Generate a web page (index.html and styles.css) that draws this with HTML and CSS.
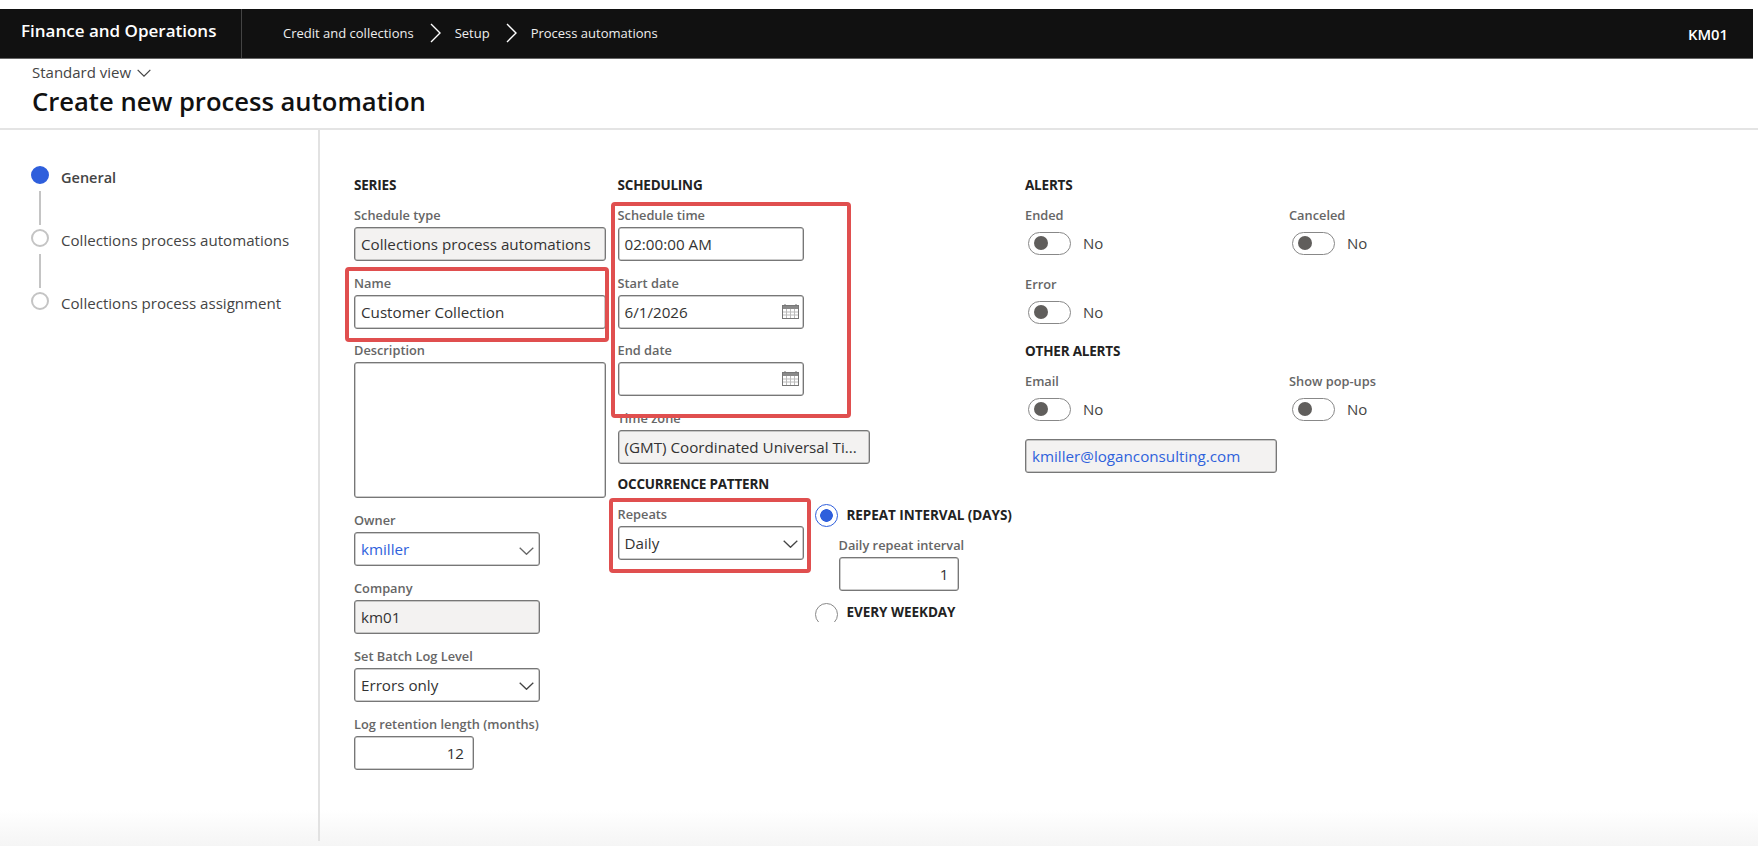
FILE: index.html
```html
<!DOCTYPE html>
<html lang="en">
<head>
<meta charset="utf-8">
<title>Create new process automation</title>
<link rel="stylesheet" href="styles.css">
</head>
<body>
<svg class="defs" width="0" height="0" aria-hidden="true">
  <symbol id="chev" viewBox="0 0 15 8"><path d="M.7.7 7.5 7.3 14.3.7" fill="none" stroke="currentColor" stroke-width="1.3"/></symbol>
  <symbol id="cal" viewBox="0 0 17 15">
    <rect x=".5" y="1.5" width="16" height="13" fill="#fff" stroke="#777"/>
    <rect x="1" y="2" width="15" height="3" fill="#8a8a8a"/>
    <path d="M3 0v2M14 0v2" stroke="#777"/>
    <path d="M1 8h15M1 11h15M4.500 5v9M8.500 5v9M12.500 5v9" stroke="#bbb"/>
  </symbol>
</svg>
<header class="topbar">
  <div class="brand">Finance and Operations</div>
  <nav class="crumbs">
    <span>Credit and collections</span>
    <svg class="crumb-sep" viewBox="0 0 11 20"><path d="M1 1l9 9-9 9" fill="none" stroke="#fff" stroke-width="1.4"/></svg>
    <span>Setup</span>
    <svg class="crumb-sep" viewBox="0 0 11 20"><path d="M1 1l9 9-9 9" fill="none" stroke="#fff" stroke-width="1.4"/></svg>
    <span>Process automations</span>
  </nav>
  <div class="company">KM01</div>
</header>
<section class="pagehead">
  <div class="view">Standard view <svg class="view-chev"><use href="#chev"/></svg></div>
  <h1>Create new process automation</h1>
</section>
<main class="main">
  <aside class="steps">
    <div class="step"><span class="dot dot-on"></span><span class="step-name step-on">General</span></div>
    <div class="step-line"></div>
    <div class="step"><span class="dot"></span><span class="step-name">Collections process automations</span></div>
    <div class="step-line"></div>
    <div class="step"><span class="dot"></span><span class="step-name">Collections process assignment</span></div>
  </aside>
  <div class="content">
    <div class="col col-series">
      <h2>SERIES</h2>
      <div class="field"><label>Schedule type</label><div class="input wide off">Collections process automations</div></div>
      <div class="field mark fit tight"><label>Name</label><div class="input wide">Customer Collection</div><i class="red red-name"></i></div>
      <div class="field"><label>Description</label><div class="input wide area"></div></div>
      <div class="field"><label>Owner</label><div class="input mid link">kmiller<svg class="chev chev-soft"><use href="#chev"/></svg></div></div>
      <div class="field"><label>Company</label><div class="input mid off">km01</div></div>
      <div class="field"><label>Set Batch Log Level</label><div class="input mid">Errors only<svg class="chev"><use href="#chev"/></svg></div></div>
      <div class="field"><label>Log retention length (months)</label><div class="input small num">12</div></div>
    </div>
    <div class="col col-sched">
      <h2>SCHEDULING</h2>
      <div class="mark">
        <div class="field"><label>Schedule time</label><div class="input mid">02:00:00 AM</div></div>
        <div class="field tight"><label>Start date</label><div class="input mid">6/1/2026<svg class="cal"><use href="#cal"/></svg></div></div>
        <div class="field"><label>End date</label><div class="input mid"><svg class="cal"><use href="#cal"/></svg></div></div>
        <i class="red red-sched"></i>
      </div>
      <div class="field tz"><label>Time zone</label><div class="input wide off">(GMT) Coordinated Universal Ti...</div></div>
      <h2>OCCURRENCE PATTERN</h2>
      <div class="occur">
        <div class="field mark"><label>Repeats</label><div class="input mid">Daily<svg class="chev"><use href="#chev"/></svg></div><i class="red red-rep"></i></div>
        <div class="radios">
          <div class="radio-row"><span class="radio radio-on"></span><b>REPEAT INTERVAL (DAYS)</b></div>
          <div class="field sub"><label>Daily repeat interval</label><div class="input small num">1</div></div>
          <div class="radio-row"><span class="radio-clip"><span class="radio"></span></span><b>EVERY WEEKDAY</b></div>
        </div>
      </div>
    </div>
    <div class="col col-alerts">
      <h2>ALERTS</h2>
      <div class="toggles">
        <div class="tg"><label>Ended</label><div class="tg-row"><span class="switch"></span>No</div></div>
        <div class="tg"><label>Canceled</label><div class="tg-row"><span class="switch"></span>No</div></div>
        <div class="tg"><label>Error</label><div class="tg-row"><span class="switch"></span>No</div></div>
      </div>
      <h2>OTHER ALERTS</h2>
      <div class="toggles">
        <div class="tg"><label>Email</label><div class="tg-row"><span class="switch"></span>No</div></div>
        <div class="tg"><label>Show pop-ups</label><div class="tg-row"><span class="switch"></span>No</div></div>
      </div>
      <div class="input wide off link email">kmiller@loganconsulting.com</div>
    </div>
  </div>
</main>
</body>
</html>
```
FILE: styles.css
```css
* { box-sizing: border-box; }
html, body { margin: 0; height: 100%; }
body {
  width: 1758px;
  height: 846px;
  overflow: hidden;
  padding-top: 9px;
  display: flex;
  flex-direction: column;
  font-family: "Open Sans", "Noto Sans", sans-serif;
  color: #333;
  background: linear-gradient(to bottom, #fff 0, #fff 810px, #f5f5f5 846px);
}
.defs { position: absolute; }
.topbar {
  height: 50px;
  margin-right: 5px;
  background: #111;
  color: #fff;
  display: flex;
  align-items: center;
  border-bottom: 1px solid #666;
  flex: none;
}
.brand {
  width: 242px;
  height: 100%;
  padding-left: 21px;
  border-right: 1px solid #444;
  font-size: 17px;
  font-weight: 600;
  line-height: 43px;
}
.crumbs {
  display: flex;
  align-items: center;
  padding: 0 0 2px 41px;
  font-size: 13px;
  color: #eee;
}
.crumb-sep { width: 11px; height: 20px; margin: 0 14px 0 16px; }
.company { margin-left: auto; margin-right: 25px; font-size: 14.800px; font-weight: 600; }
.pagehead {
  height: 71px;
  padding: 4px 0 0 32px;
  border-bottom: 2px solid #e4e4e4;
  flex: none;
}
.view { font-size: 15px; line-height: 19px; color: #444; display: flex; align-items: center; }
.view-chev { width: 14px; height: 8px; margin-left: 6px; color: #444; }
h1 { margin: 2px 0 0; font-size: 25.600px; line-height: 36px; font-weight: 600; color: #111; }
.main { flex: 1; display: flex; min-height: 0; }
.steps {
  width: 320px;
  height: 711px;
  padding: 35px 0 0 31px;
  border-right: 2px solid #e2e2e2;
  flex: none;
}
.step { display: flex; align-items: center; height: 19px; }
.dot { width: 18px; height: 18px; border-radius: 50%; border: 2px solid #c4c4c4; background: #fff; flex: none; }
.dot-on { background: #2f5fdc; border-color: #2f5fdc; }
.step-name { margin-left: 12px; font-size: 15.100px; padding-top: 5px; color: #444; white-space: nowrap; }
.step-on { font-size: 14.500px; font-weight: 600; }
.step-line { width: 2px; height: 34px; margin: 7px 0 3px 8px; background: #c4c4c4; }
.content { display: flex; padding: 45px 0 0 34px; align-items: flex-start; }
.col-series { width: 263.500px; }
.col-sched { width: 407.500px; }
h2 { margin: 0 0 11px; font-size: 13.500px; line-height: 20px; font-weight: 700; color: #222; letter-spacing: -.2px; white-space: nowrap; }
.field { position: relative; margin-bottom: 13px; }
.fit { width: 252px; }
.tight { margin-bottom: 12px; }
label { display: block; height: 21px; font-size: 12.800px; line-height: 19px; font-weight: 600; color: #666; white-space: nowrap; }
.input {
  position: relative;
  height: 34px;
  border: 1px solid #777;
  border-radius: 3px;
  padding: 1px 0 0 6px;
  font-size: 15.200px;
  line-height: 30px;
  white-space: nowrap;
  background: #fff;
  box-shadow: inset 0 0 0 .5px #999;
}
.wide { width: 252px; }
.mid { width: 186px; }
.small { width: 120px; }
.off { background: #f3f2f1; }
.area { height: 136px; }
.link { color: #2f62dc; }
.num { text-align: right; padding-right: 9px; }
.chev { position: absolute; right: 5px; top: 13px; width: 15px; height: 8px; color: #444; }
.chev-soft { color: #666; top: 14px; }
.cal { position: absolute; right: 4px; top: 8px; width: 17px; height: 15px; }
.mark { position: relative; }
.red { position: absolute; z-index: 2; border: 4px solid #e04f4f; border-radius: 4px; pointer-events: none; }
.red-name { left: -9px; right: -3px; top: -7px; bottom: -13px; }
.red-sched { left: -7px; width: 240px; top: -4px; bottom: -22px; }
.red-rep { left: -9px; right: -7px; top: -7px; bottom: -13px; }
.tz { margin-bottom: 10px; }
.occur { display: flex; align-items: flex-start; }
.radios { margin-left: 11px; }
.radio-row { display: flex; align-items: center; height: 20px; white-space: nowrap; }
.radio-row b { margin-left: 9px; font-size: 13.500px; font-weight: 700; color: #222; letter-spacing: -.05px; }
.radio {
  display: block;
  width: 23px;
  height: 23px;
  border: 1.500px solid #888;
  border-radius: 50%;
  background: #fff;
  flex: none;
}
.radio-on { border-color: #2f5fdc; background: radial-gradient(circle, #2f5fdc 0, #2f5fdc 6px, #fff 6.600px); }
.sub { margin: 11px 0 11px 24px; }
.radio-clip { display: block; width: 23px; height: 19px; overflow: hidden; align-self: flex-start; margin-top: 1px; }
.col-alerts { width: 516px; }
.toggles { display: grid; grid-template-columns: 264px 264px; }
.tg { height: 69px; }
.toggles + h2 { margin-top: -3px; }
.tg-row { display: flex; align-items: center; height: 23px; padding: 0 0 1px 3px; font-size: 15px; color: #444; margin-top: 5px; }
.switch {
  position: relative;
  width: 43px;
  height: 23px;
  margin-right: 12px;
  border: 1.500px solid #888;
  border-radius: 12px;
  background: #fff;
  flex: none;
}
.switch::after {
  content: "";
  position: absolute;
  left: 5px;
  top: 3.500px;
  width: 14px;
  height: 14px;
  border-radius: 50%;
  background: #605e5c;
}
.email { margin-top: -2px; }
```
